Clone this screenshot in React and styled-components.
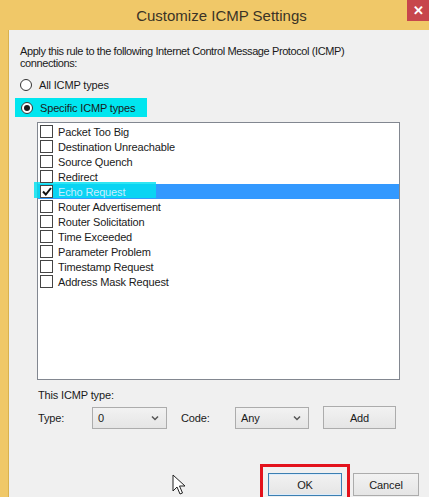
import React from "react";
import styled, { createGlobalStyle } from "styled-components";

const GlobalStyle = createGlobalStyle`
  html, body {
    margin: 0;
    padding: 0;
    width: 429px;
    height: 497px;
    overflow: hidden;
    background: #f0f0f0;
  }
  * { box-sizing: border-box; }
`;

const Window = styled.div`
  position: relative;
  width: 429px;
  height: 497px;
  overflow: hidden;
  display: flex;
  flex-direction: column;
  background: #f0c868;
  font-family: "Liberation Sans", Arial, sans-serif;
  font-size: 11px;
  letter-spacing: -0.15px;
  color: #1a1a1a;
`;

const TitleBar = styled.div`
  height: 30px;
  flex: none;
  display: flex;
  align-items: center;
  justify-content: center;
  padding-left: 14px;
  position: relative;
`;

const Title = styled.span`
  font-size: 15px;
  letter-spacing: 0;
  color: #3a3326;
`;

const CloseButton = styled.div`
  position: absolute;
  top: 0;
  right: 0;
  width: 22px;
  height: 21px;
  background: #c7464c;
  display: flex;
  align-items: center;
  justify-content: center;
  color: #fff;
  font-size: 13px;
  font-weight: bold;
`;

const Body = styled.div`
  flex: 1;
  margin-left: 8px;
  background: #f0f0f0;
  border-left: 1px solid #d9b24f;
  padding: 15px 0 0 11px;
  display: flex;
  flex-direction: column;
`;

const Intro = styled.div`
  line-height: 12px;
  letter-spacing: -0.4px;
`;

const RadioRow = styled.div`
  display: flex;
  align-items: center;
  gap: 7px;
  height: ${p => p.$h}px;
  margin-top: ${p => p.$mt}px;
  margin-left: ${p => (p.$highlight ? -5 : 0)}px;
  padding-left: ${p => (p.$highlight ? 6 : 0)}px;
  width: ${p => (p.$highlight ? "132px" : "auto")};
  background: ${p => (p.$highlight ? "#00e6ef" : "transparent")};
`;

const Radio = styled.span`
  width: 12px;
  height: 12px;
  border-radius: 50%;
  border: 1px solid #333;
  background: #fff;
  display: flex;
  align-items: center;
  justify-content: center;
  &::after {
    content: "";
    width: 6px;
    height: 6px;
    border-radius: 50%;
    background: ${p => (p.$checked ? "#1a1a1a" : "transparent")};
  }
`;

const ListBox = styled.div`
  position: relative;
  margin: 5px 0 0 17px;
  width: 363px;
  height: 258px;
  background: #fff;
  border: 1px solid #828790;
  padding-top: 1px;
`;

const ListRow = styled.div`
  position: relative;
  height: 15px;
  display: flex;
  align-items: center;
  padding-left: 2px;
  gap: 5px;
  background: ${p => (p.$selected ? "#3399ff" : "transparent")};
  color: ${p => (p.$selected ? "#fff" : "#1a1a1a")};
`;

const CheckBox = styled.span`
  width: 13px;
  height: 13px;
  border: 1px solid #444;
  background: #fff;
  flex: none;
  display: flex;
  align-items: center;
  justify-content: center;
  position: relative;
  z-index: 2;
`;

const Marker = styled.div`
  position: absolute;
  left: -4px;
  top: -2px;
  width: 122px;
  height: 16px;
  background: rgba(0, 225, 240, 0.82);
  z-index: 1;
`;

const RowLabel = styled.span`
  position: relative;
  z-index: 2;
  color: ${p => (p.$selected ? "#c8ecff" : "inherit")};
`;

const SectionLabel = styled.div`
  margin: 9px 0 0 18px;
  line-height: 12px;
`;

const ControlRow = styled.div`
  display: flex;
  align-items: center;
  margin: 5px 0 0 18px;
  height: 23px;
`;

const FieldLabel = styled.span`
  width: ${p => p.$w}px;
  flex: none;
`;

const Combo = styled.div`
  width: ${p => p.$w}px;
  height: 22px;
  flex: none;
  border: 1px solid #acacac;
  background: linear-gradient(#f2f2f2, #e5e5e5);
  display: flex;
  align-items: center;
  justify-content: space-between;
  padding: 0 7px 0 5px;
  margin-right: ${p => p.$mr}px;
`;

const Button = styled.div`
  position: relative;
  width: ${p => p.$w}px;
  height: 23px;
  flex: none;
  border: 1px solid ${p => (p.$default ? "#3c7fb1" : "#acacac")};
  background: linear-gradient(#f2f2f2, #e5e5e5);
  display: flex;
  align-items: center;
  justify-content: center;
  box-shadow: ${p => (p.$default ? "inset 0 0 0 1px #dcecfc" : "none")};
`;

const Footer = styled.div`
  display: flex;
  margin: 44px 0 0 248px;
  gap: 11px;
`;

const RedFrame = styled.div`
  position: absolute;
  left: -9px;
  top: -10px;
  right: -9px;
  bottom: -14px;
  border: 3px solid #e3121c;
`;

const Cursor = styled.svg`
  position: absolute;
  left: 172px;
  top: 474px;
`;

const Chevron = () => (
  <svg width="8" height="6" viewBox="0 0 8 6">
    <path d="M1 1.5 L4 4.5 L7 1.5" fill="none" stroke="#555" strokeWidth="1.5" />
  </svg>
);

const Check = () => (
  <svg width="10" height="9" viewBox="0 0 10 9">
    <path d="M1 4.5 L3.8 7.5 L9 1" fill="none" stroke="#111" strokeWidth="2" />
  </svg>
);

const items = [
  "Packet Too Big",
  "Destination Unreachable",
  "Source Quench",
  "Redirect",
  "Echo Request",
  "Router Advertisement",
  "Router Solicitation",
  "Time Exceeded",
  "Parameter Problem",
  "Timestamp Request",
  "Address Mask Request",
];

export default function App() {
  return (
    <Window>
      <GlobalStyle />
      <TitleBar>
        <Title>Customize ICMP Settings</Title>
        <CloseButton>✕</CloseButton>
      </TitleBar>
      <Body>
        <Intro>
          Apply this rule to the following Internet Control Message Protocol (ICMP)
          <br />
          connections:
        </Intro>
        <RadioRow $h={18} $mt={7}>
          <Radio />
          All ICMP types
        </RadioRow>
        <RadioRow $h={19} $mt={4} $highlight>
          <Radio $checked />
          Specific ICMP types
        </RadioRow>
        <ListBox>
          {items.map(name => {
            const sel = name === "Echo Request";
            return (
              <ListRow key={name} $selected={sel}>
                {sel && <Marker />}
                <CheckBox>{sel && <Check />}</CheckBox>
                <RowLabel $selected={sel}>{name}</RowLabel>
              </ListRow>
            );
          })}
        </ListBox>
        <SectionLabel>This ICMP type:</SectionLabel>
        <ControlRow>
          <FieldLabel $w={54}>Type:</FieldLabel>
          <Combo $w={75} $mr={14}>
            <span>0</span>
            <Chevron />
          </Combo>
          <FieldLabel $w={54}>Code:</FieldLabel>
          <Combo $w={74} $mr={14}>
            <span>Any</span>
            <Chevron />
          </Combo>
          <Button $w={73}>Add</Button>
        </ControlRow>
        <Footer>
          <Button $w={74} $default>
            OK
            <RedFrame />
          </Button>
          <Button $w={66}>Cancel</Button>
        </Footer>
      </Body>
      <Cursor width="14" height="22" viewBox="0 0 14 22">
        <path
          d="M1 1 L1 17 L5 13 L8 20 L10.5 19 L7.5 12 L13 12 Z"
          fill="#fff"
          stroke="#222"
          strokeWidth="1"
          strokeLinejoin="round"
        />
      </Cursor>
    </Window>
  );
}
